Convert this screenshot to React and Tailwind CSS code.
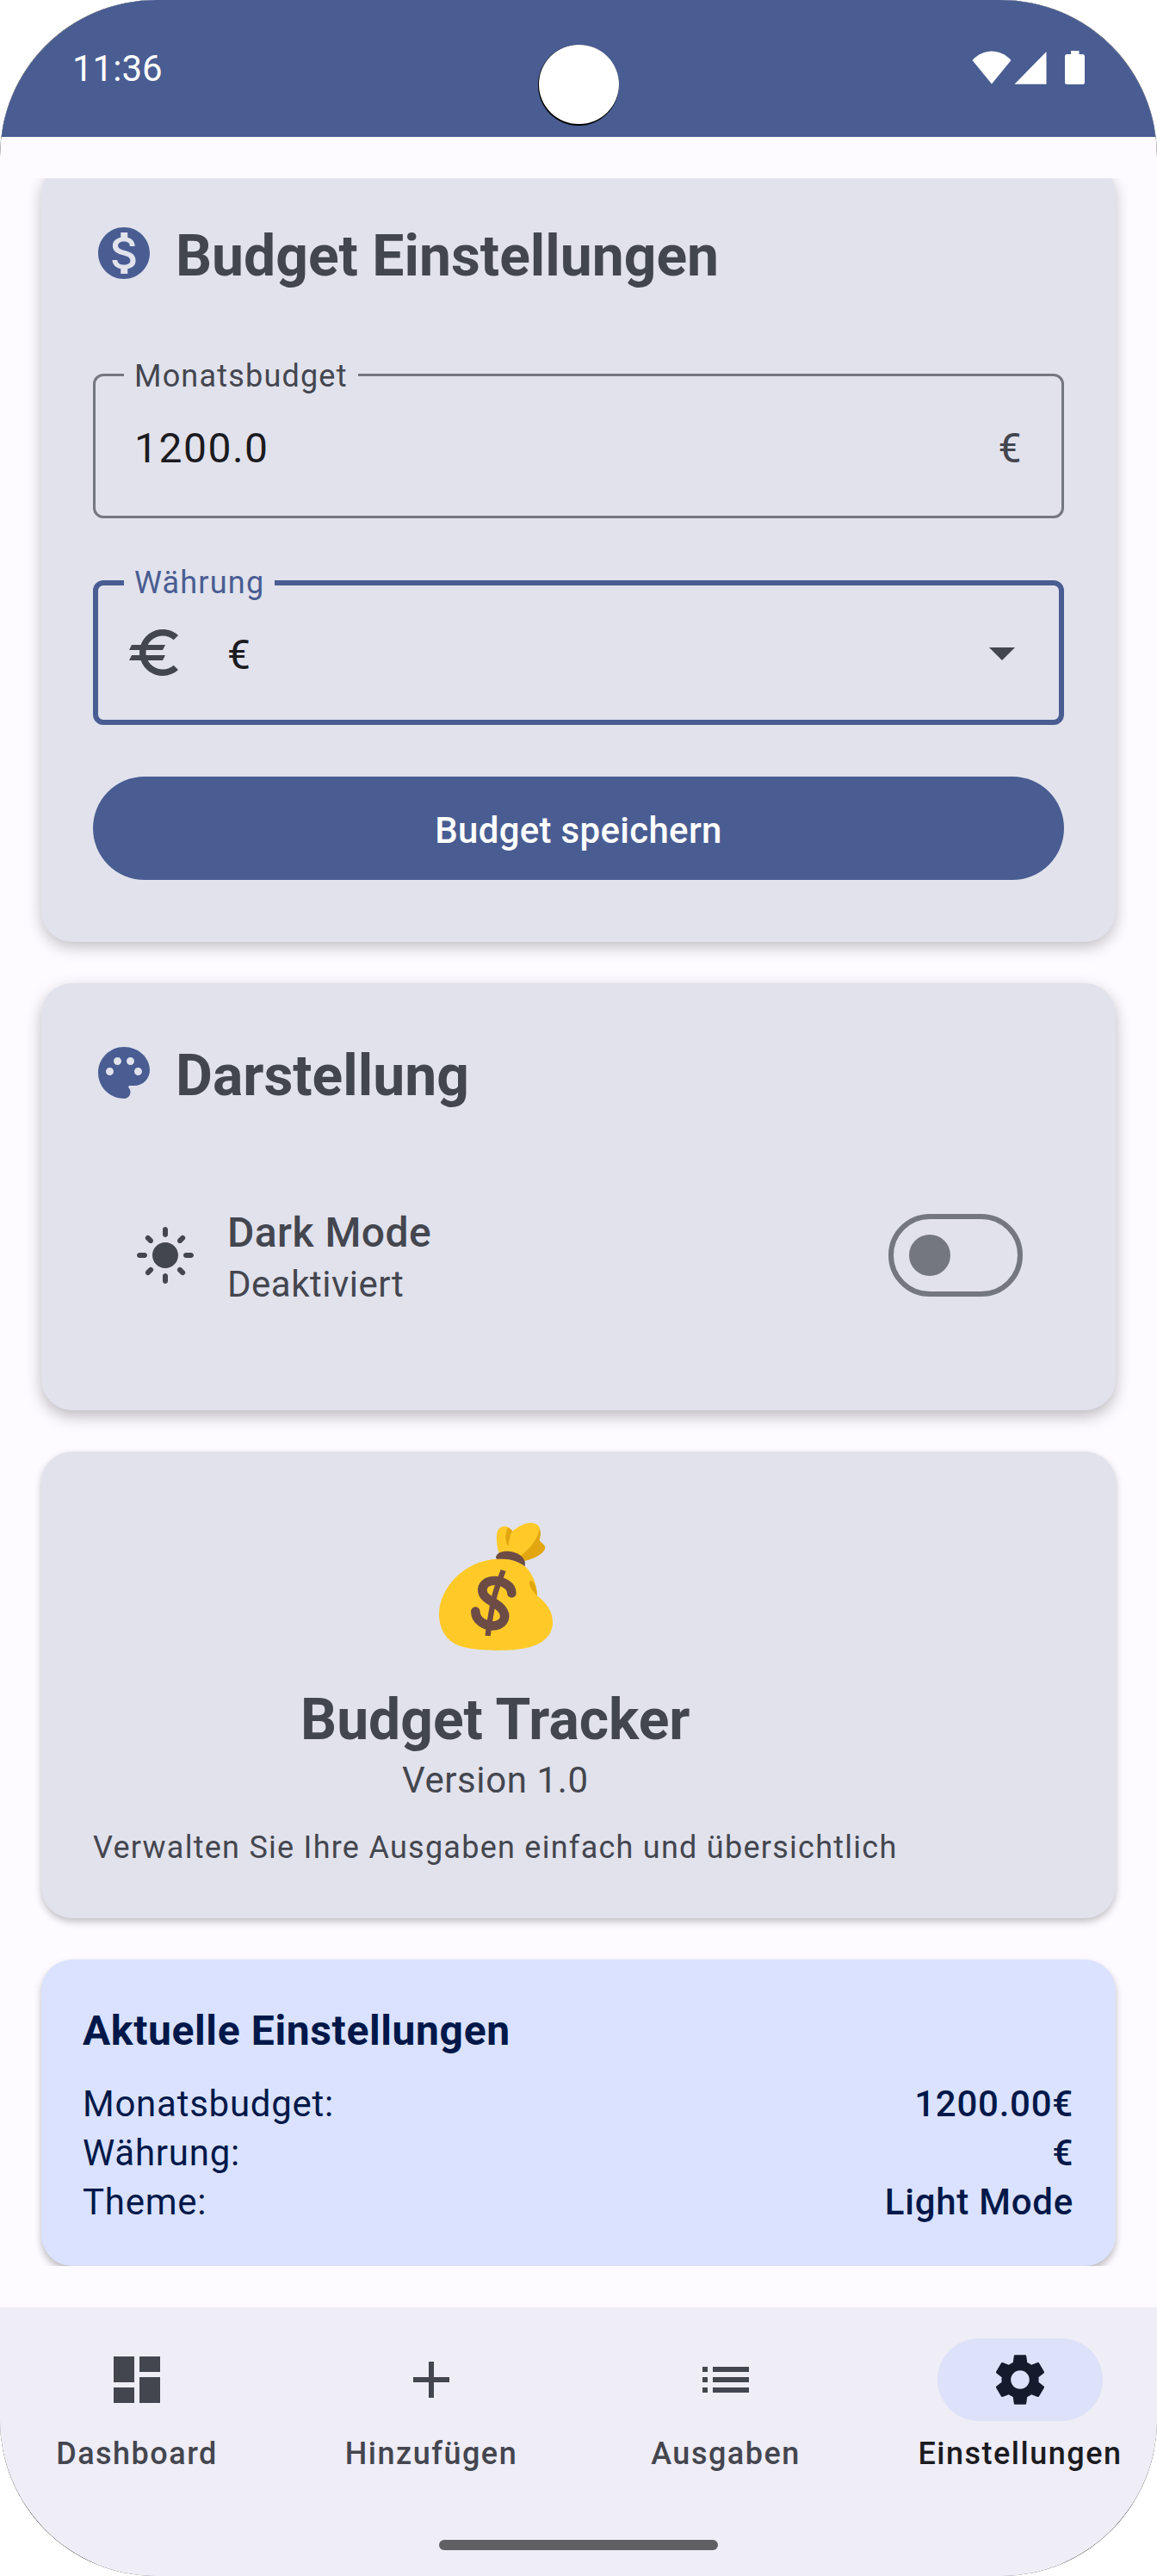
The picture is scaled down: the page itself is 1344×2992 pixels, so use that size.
import { MdAdd, MdDashboard, MdLightMode, MdList, MdSettings } from "react-icons/md";

const TITLE = "text-[66px] leading-[84px] font-bold text-[#44464f]";

function Icon({ d, className = "" }) {
  return (
    <svg viewBox="0 0 24 24" fill="currentColor" className={`size-[72px] shrink-0 ${className}`}>
      <path d={d} />
    </svg>
  );
}

const MONEY =
  "M12 2C6.48 2 2 6.48 2 12s4.48 10 10 10 10-4.48 10-10S17.52 2 12 2zm1.41 16.09V20h-2.67v-1.93c-1.71-.36-3.16-1.46-3.27-3.4h1.96c.1 1.05.82 1.87 2.65 1.87 1.96 0 2.4-.98 2.4-1.59 0-.83-.44-1.61-2.67-2.14-2.48-.6-4.18-1.62-4.18-3.67 0-1.72 1.39-2.84 3.11-3.21V4h2.67v1.95c1.86.45 2.79 1.86 2.85 3.39H14.3c-.05-1.11-.64-1.87-2.22-1.87-1.5 0-2.4.68-2.4 1.64 0 .84.65 1.39 2.67 1.91s4.18 1.39 4.18 3.91c-.01 1.83-1.38 2.83-3.12 3.16z";
const PALETTE =
  "M12 2C6.49 2 2 6.49 2 12s4.49 10 10 10c1.38 0 2.5-1.12 2.5-2.5 0-.61-.23-1.2-.64-1.67-.08-.1-.13-.21-.13-.33 0-.28.22-.5.5-.5H16c3.31 0 6-2.69 6-6 0-4.96-4.49-9-10-9zm5.500 11c-.83 0-1.500-.67-1.500-1.500s.67-1.500 1.500-1.500 1.500.67 1.500 1.500-.67 1.500-1.500 1.500zm-3-4c-.83 0-1.500-.67-1.500-1.500S13.670 6 14.500 6s1.500.67 1.500 1.500S15.330 9 14.500 9zM5 11.500c0-.83.67-1.500 1.500-1.500s1.500.67 1.500 1.500S7.330 13 6.500 13 5 12.330 5 11.500zm6-4c0 .83-.67 1.500-1.500 1.500S8 8.330 8 7.500 8.670 6 9.500 6s1.500.67 1.500 1.500z";
const EURO =
  "M15 18.5c-2.51 0-4.68-1.42-5.76-3.5H15l1-2H8.58c-.05-.33-.08-.66-.08-1s.03-.67.08-1H15l1-2H9.24C10.32 6.92 12.5 5.5 15 5.5c1.61 0 3.09.59 4.23 1.57L21 5.3C19.41 3.87 17.3 3 15 3c-3.92 0-7.24 2.51-8.48 6H3l-1 2h4.06c-.04.33-.06.66-.06 1s.02.67.06 1H3l-1 2h4.52c1.24 3.49 4.56 6 8.48 6 2.31 0 4.41-.87 6-2.3l-1.78-1.77c-1.13.98-2.6 1.57-4.22 1.57z";

function StatusBar() {
  return (
    <header className="relative flex h-[159px] shrink-0 items-start justify-between bg-[#495d92] px-[84px] text-white">
      <span className="pt-[55px] text-[42px] leading-[50px]">11:36</span>
      <div className="mt-[59px] flex items-start">
        <svg className="h-[39px] w-[46px]" viewBox="0 0 46 39" fill="currentColor">
          <path d="M0.5 11C13-3 33-3 45.500 11L23 38.500z" />
        </svg>
        <svg className="ml-[3px] h-[39px] w-[38px]" viewBox="0 0 38 39" fill="currentColor">
          <path d="M37.500 1v37.700H0.500z" />
        </svg>
        <svg className="ml-[21px] h-[39px] w-[23px]" viewBox="0 0 23 39" fill="currentColor">
          <path d="M7 0h9.500v4H21q2 0 2 2.500V36.500q0 2.500-2.500 2.500h-18Q0 39 0 36.500V6.500Q0 4 2 4h5z" />
        </svg>
      </div>
      <div className="absolute left-[625px] top-[52px] size-[94px] rounded-full bg-black">
        <div className="mx-auto h-[92px] w-[93px] rounded-full bg-white" />
      </div>
    </header>
  );
}

function Card({ className = "", children }) {
  return <section className={`shrink-0 rounded-[36px] ${className}`}>{children}</section>;
}

function CardTitle({ d, children }) {
  return (
    <div className="flex items-center gap-[24px]">
      <Icon d={d} className="text-[#495d92]" />
      <h2 className={`pt-[8px] ${TITLE}`}>{children}</h2>
    </div>
  );
}

function Field({ label, active = false, children }) {
  return (
    <div
      className={
        active
          ? "relative flex h-[168px] items-center rounded-[12px] border-[6px] border-[#495d92] px-[30px]"
          : "relative flex h-[168px] items-center rounded-[12px] border-[3px] border-[#757780] px-[45px]"
      }
    >
      <span
        className={
          active
            ? "absolute left-[30px] top-[-27px] bg-[#e1e2ec] px-[12px] text-[36px] leading-[48px] tracking-[1.2px] text-[#495d92]"
            : "absolute left-[33px] top-[-24px] bg-[#e1e2ec] px-[12px] text-[36px] leading-[48px] tracking-[1.2px] text-[#44464f]"
        }
      >
        {label}
      </span>
      {children}
    </div>
  );
}

function MoneyBag() {
  return (
    <svg className="h-[150px] w-[134px]" viewBox="84 84 402 450">
      <path
        fill="#e2a610"
        d="M436 98C446 112 445 130 440 146C444 156 460 160 460 174C456 194 422 212 388 219L362 200z"
      />
      <path
        fill="#ffca28"
        d="M299 192C291 168 289 140 292 122C297 98 318 94 332 102Q340 107 346 115C366 98 390 86 410 86C428 87 438 94 440 104C437 140 406 178 370 204L340 215z"
      />
      <path fill="#e2a610" d="M330 103Q340 108 346 115C336 130 334 150 331 169C319 150 319 122 330 103z" />
      <path
        fill="#ffca28"
        d="M294 212C180 216 90 312 90 405C90 460 120 506 175 519C240 534 340 534 395 522C450 510 486 480 486 432C486 395 464 364 431 340C432 300 415 262 389 237C365 218 330 210 294 212z"
      />
      <path fill="#e2a610" d="M432 340C415 326 402 304 405 292C412 280 430 298 432 340z" />
      <path
        fill="#6d4c46"
        d="M288 208C289 190 310 184 330 185C365 187 388 206 390 226L389 238C365 220 335 210 294 213Q288 212 288 208z"
      />
      <g fill="none" stroke="#6d4c46">
        <path
          strokeWidth="32"
          strokeLinecap="round"
          d="M343 331C344 306 312 287 280 288C246 290 234 314 245 336C257 358 288 362 308 386C328 410 318 438 288 444C250 450 217 426 217 395"
        />
        <path strokeWidth="19" d="M314 252C296 300 283 330 277 370C270 410 264 440 260 480" />
      </g>
    </svg>
  );
}

function SummaryRow({ label, value }) {
  return (
    <div className="flex h-[57px] justify-between text-[42px] leading-[57px] tracking-[0.75px]">
      <span>{label}</span>
      <span className="mr-px font-medium">{value}</span>
    </div>
  );
}

function NavItem({ icon: IconCmp, label, active = false }) {
  return (
    <div className="flex w-[318px] flex-col items-center">
      <div
        className={
          active
            ? "flex h-[96px] w-[192px] items-center justify-center rounded-full bg-[#dde1f9] text-[#151b2c]"
            : "flex h-[96px] w-[192px] items-center justify-center text-[#44464f]"
        }
      >
        <IconCmp className="size-[72px]" />
      </div>
      <span
        className={
          active
            ? "mt-[14px] text-[36px] leading-[48px] font-medium tracking-[1.5px] text-[#1b1b1f]"
            : "mt-[14px] text-[36px] leading-[48px] font-medium tracking-[1.5px] text-[#44464f]"
        }
      >
        {label}
      </span>
    </div>
  );
}

export default function App() {
  return (
    <div className="h-[2992px] w-[1344px] bg-white">
      <div className="rounded-[181px] bg-black">
        <div className="flex h-[2992px] w-[1344px] flex-col overflow-hidden rounded-[182px] bg-[#fdfbff] font-['Roboto',sans-serif] whitespace-nowrap">
          <StatusBar />
          <main className="mt-[48px] h-[2425px] shrink-0 overflow-hidden px-[48px]">
            <div className="-mt-[17px] flex flex-col gap-[48px]">
              <Card className="h-[904px] bg-[#e1e2ec] px-[60px] pt-[58px] shadow-[0_6px_18px_rgba(0,0,0,0.24)]">
                <CardTitle d={MONEY}>Budget Einstellungen</CardTitle>
                <div className="mt-[94px] flex flex-col">
                  <Field label="Monatsbudget">
                    <span className="flex-1 pt-[6px] text-[48px] leading-[72px] tracking-[1.5px] text-[#1b1b1f]">1200.0</span>
                    <span className="pt-[6px] text-[48px] leading-[72px] tracking-[1.5px] text-[#44464f]">€</span>
                  </Field>
                  <div className="h-[72px]" />
                  <Field label="Währung" active>
                    <Icon d={EURO} className="text-[#44464f]" />
                    <span className="ml-[48px] flex-1 pt-[6px] text-[48px] leading-[72px] tracking-[1.5px] text-[#1b1b1f]">€</span>
                    <Icon d="M7 10l5 5 5-5z" className="text-[#44464f]" />
                  </Field>
                  <button className="mt-[60px] h-[120px] rounded-full bg-[#495d92] pt-[5px] text-[42px] leading-[60px] font-medium tracking-[0.3px] text-white">
                    Budget speichern
                  </button>
                </div>
              </Card>

              <Card className="h-[496px] bg-[#e1e2ec] px-[60px] pt-[58px] shadow-[0_7px_18px_rgba(0,0,0,0.26)]">
                <CardTitle d={PALETTE}>Darstellung</CardTitle>
                <div className="mt-[105px] flex items-center px-[48px]">
                  <MdLightMode className="size-[72px] text-[#44464f]" />
                  <div className="ml-[36px] flex-1 pb-[2px] text-[#44464f]">
                    <div className="text-[48px] leading-[70px] font-medium tracking-[0.45px]">Dark Mode</div>
                    <div className="text-[42px] leading-[50px] tracking-[0.5px]">Deaktiviert</div>
                  </div>
                  <div className="flex h-[96px] w-[156px] items-center rounded-full border-[6px] border-[#757780] bg-[#e1e2ec] pl-[18px]">
                    <div className="size-[48px] rounded-full bg-[#757780]" />
                  </div>
                </div>
              </Card>

              <Card className="h-[542px] bg-[#e1e2ec] px-[60px] pt-[82px] text-[#44464f] shadow-[0_4px_8px_rgba(0,0,0,0.24)]">
                <div className="flex w-fit flex-col items-center">
                  <MoneyBag />
                  <h2 className={`mt-[38px] ${TITLE}`}>Budget Tracker</h2>
                  <p className="-mt-[2px] text-[42px] leading-[60px] tracking-[0.6px]">Version 1.0</p>
                  <p className="mt-[24px] text-[36px] leading-[48px] tracking-[1.26px]">
                    Verwalten Sie Ihre Ausgaben einfach und übersichtlich
                  </p>
                </div>
              </Card>

              <Card className="h-[356px] bg-[#dae2ff] px-[48px] pt-[47px] text-[#001849] shadow-[0_5px_9px_rgba(0,0,0,0.26)]">
                <h3 className="text-[48px] leading-[72px] font-bold tracking-[0.62px]">Aktuelle Einstellungen</h3>
                <div className="mt-[20px]">
                  <SummaryRow label="Monatsbudget:" value="1200.00€" />
                  <SummaryRow label="Währung:" value="€" />
                  <SummaryRow label="Theme:" value="Light Mode" />
                </div>
              </Card>
            </div>
          </main>
          <nav className="mt-[48px] flex h-[312px] shrink-0 flex-col items-center bg-[#efedf6] pt-[36px]">
            <div className="flex gap-[24px]">
              <NavItem icon={MdDashboard} label="Dashboard" />
              <NavItem icon={MdAdd} label="Hinzufügen" />
              <NavItem icon={MdList} label="Ausgaben" />
              <NavItem icon={MdSettings} label="Einstellungen" active />
            </div>
            <div className="mt-auto mb-[30px] h-[12px] w-[324px] rounded-full bg-[#606064]" />
          </nav>
        </div>
      </div>
    </div>
  );
}
